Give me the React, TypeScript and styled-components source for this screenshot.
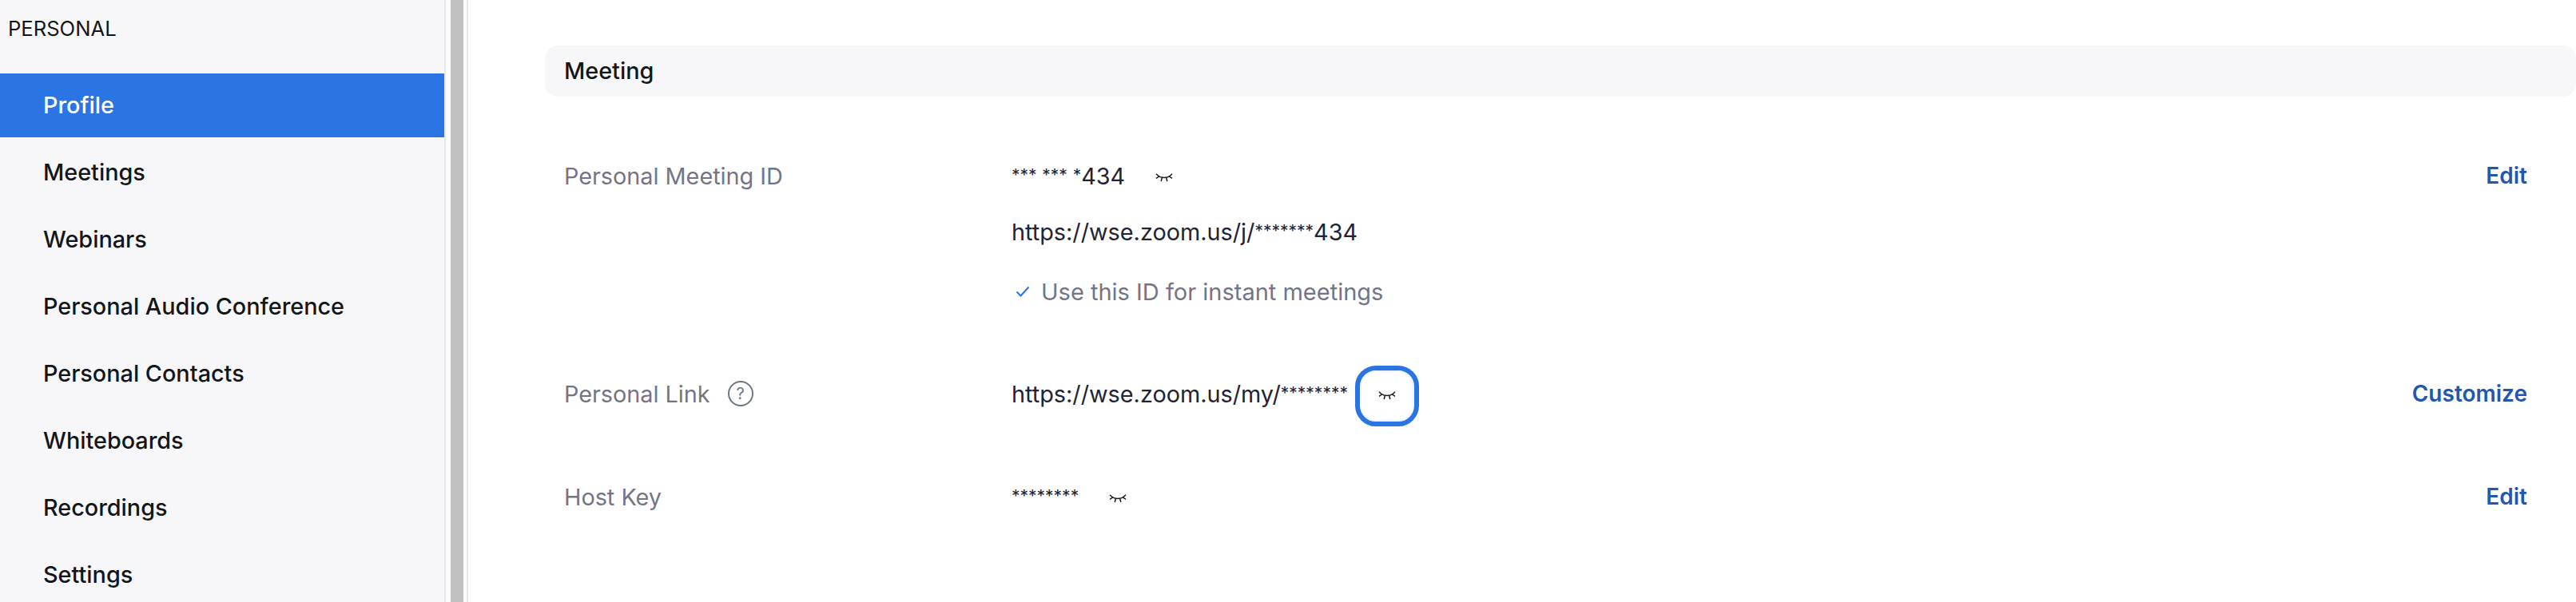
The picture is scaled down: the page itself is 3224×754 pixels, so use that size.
import styled, { createGlobalStyle } from "styled-components";

const Global = createGlobalStyle`
  html, body {
    margin: 0;
    padding: 0;
    background: #fff;
  }
  * {
    box-sizing: border-box;
  }
`;

const Page = styled.div`
  width: 3224px;
  height: 754px;
  display: flex;
  overflow: hidden;
  background: #fff;
  font-family: Inter, "Liberation Sans", sans-serif;
  color: #131619;
`;

// SIDEBAR
const Sidebar = styled.nav`
  width: 556px;
  flex-shrink: 0;
  background: #f7f7fa;
  overflow: hidden;
`;

const SideTitle = styled.div`
  height: 92px;
  padding: 21px 0 0 10px;
  font-size: 25.6px;
  line-height: 30px;
  font-weight: 400;
`;

const SideList = styled.div`
  display: flex;
  flex-direction: column;
  gap: 4px;
`;

const SideItem = styled.a<{ $active?: boolean }>`
  height: 80px;
  flex-shrink: 0;
  display: flex;
  align-items: center;
  padding: 0 0 2px 54px;
  font-size: 28.8px;
  font-weight: 450;
  color: ${(p) => (p.$active ? "#fff" : "#131619")};
  background: ${(p) => (p.$active ? "#2b74e4" : "transparent")};
`;

const ScrollTrack = styled.div`
  width: 30px;
  flex-shrink: 0;
  background: #fafafa;
  border-left: 2px solid #e8e8e8;
  border-right: 2px solid #e8e8e8;
  padding: 0 4px 0 6px;
`;

const ScrollThumb = styled.div`
  height: 100%;
  background: #c1c1c1;
`;

// MAIN PANEL
const Main = styled.main`
  flex: 1;
  padding: 57px 0 0 96px;
`;

const SectionHeader = styled.div`
  height: 64px;
  display: flex;
  align-items: center;
  padding: 0 0 2px 24px;
  background: #f7f7fa;
  border-radius: 16px;
  font-size: 28.8px;
  font-weight: 500;
`;

const Row = styled.div<{ $top: number }>`
  display: flex;
  margin-top: ${(p) => p.$top}px;
  padding: 0 61px 0 24px;
`;

const Label = styled.div<{ $offset?: number }>`
  width: 560px;
  flex-shrink: 0;
  display: flex;
  align-items: center;
  height: 40px;
  margin-top: ${(p) => p.$offset ?? 0}px;
  font-size: 28.8px;
  color: #747487;
`;

const Values = styled.div`
  flex: 1;
  display: flex;
  flex-direction: column;
`;

const ValueLine = styled.div<{ $top?: number }>`
  display: flex;
  align-items: center;
  min-height: 40px;
  margin-top: ${(p) => p.$top ?? 0}px;
  font-size: 28.8px;
  color: #232333;
`;

const ValueText = styled.span`
  white-space: pre;
`;

// the masked digits are set smaller and sit high in the line
const Mask = styled.span`
  font-size: 21px;
  vertical-align: 4px;
`;

const Gap = styled.span`
  font-size: 24px;
`;

const CheckIcon = styled.svg`
  margin-left: 5px;
`;

const Muted = styled.span`
  margin-left: 14px;
  font-size: 29px;
  color: #747487;
`;

const Action = styled.a<{ $offset?: number }>`
  height: 40px;
  display: flex;
  align-items: center;
  margin-top: ${(p) => p.$offset ?? 0}px;
  font-size: 28px;
  font-weight: 600;
  color: #1f58b0;
`;

const EyeSlot = styled.span`
  display: inline-flex;
  margin: 6px 0 0 38px;
`;

const EyeButton = styled.button`
  width: 80px;
  height: 76px;
  margin-left: 9px;
  padding: 0;
  display: flex;
  align-items: center;
  justify-content: center;
  background: #fff;
  border: 6px solid #2b74e4;
  border-radius: 26px;
  box-shadow: inset 0 0 0 2px #eef4fd;
`;

const Eye = () => (
  <svg width="22" height="12" viewBox="0 0 22 12" fill="none" stroke="#131619" strokeWidth="1.5">
    <path d="M1 0.8L3.4 3C7 6.2 15 6.2 18.6 3L21 0.8" />
    <path d="M4.6 4L1 6.4M17.4 4L21 6.4" />
    <path d="M8.4 5.4L7.2 10M13.6 5.4L14.8 10" />
  </svg>
);

const HelpIcon = styled.span`
  width: 32px;
  height: 32px;
  margin-left: 22px;
  display: flex;
  align-items: center;
  justify-content: center;
  border: 2px solid #6e7680;
  border-radius: 50%;
  font-size: 20px;
  color: #6e7680;
`;

const navItems = [
  "Profile",
  "Meetings",
  "Webinars",
  "Personal Audio Conference",
  "Personal Contacts",
  "Whiteboards",
  "Recordings",
  "Settings",
];

export default function App() {
  return (
    <Page>
      <Global />
      <Sidebar>
        <SideTitle>PERSONAL</SideTitle>
        <SideList>
          {navItems.map((item, i) => (
            <SideItem key={item} $active={i === 0}>
              {item}
            </SideItem>
          ))}
        </SideList>
      </Sidebar>
      <ScrollTrack>
        <ScrollThumb />
      </ScrollTrack>

      <Main>
        <SectionHeader>Meeting</SectionHeader>

        <Row $top={79}>
          <Label>Personal Meeting ID</Label>
          <Values>
            <ValueLine>
              <ValueText>
                <Mask>***</Mask>
                <Gap> </Gap>
                <Mask>***</Mask>
                <Gap> </Gap>
                <Mask>*</Mask>434
              </ValueText>
              <EyeSlot>
                <Eye />
              </EyeSlot>
            </ValueLine>
            <ValueLine $top={30}>
              <ValueText>
                https://wse.zoom.us/j/<Mask>*******</Mask>434
              </ValueText>
            </ValueLine>
            <ValueLine $top={35}>
              <CheckIcon width="18" height="14" viewBox="0 0 18 14" fill="none" stroke="#2b74e4" strokeWidth="2">
                <path d="M1.5 7.5L6.5 12.5L16.5 1.5" />
              </CheckIcon>
              <Muted>Use this ID for instant meetings</Muted>
            </ValueLine>
          </Values>
          <Action>Edit</Action>
        </Row>

        <Row $top={73}>
          <Label $offset={15}>
            Personal Link
            <HelpIcon>?</HelpIcon>
          </Label>
          <Values>
            <ValueLine>
              <ValueLine $top={-6}>
                <ValueText>
                  https://wse.zoom.us/my/<Mask>********</Mask>
                </ValueText>
              </ValueLine>
              <EyeButton>
                <Eye />
              </EyeButton>
            </ValueLine>
          </Values>
          <Action $offset={15}>Customize</Action>
        </Row>

        <Row $top={68}>
          <Label>Host Key</Label>
          <Values>
            <ValueLine>
              <ValueText>
                <Mask>********</Mask>
              </ValueText>
              <EyeSlot>
                <Eye />
              </EyeSlot>
            </ValueLine>
          </Values>
          <Action>Edit</Action>
        </Row>
      </Main>
    </Page>
  );
}
